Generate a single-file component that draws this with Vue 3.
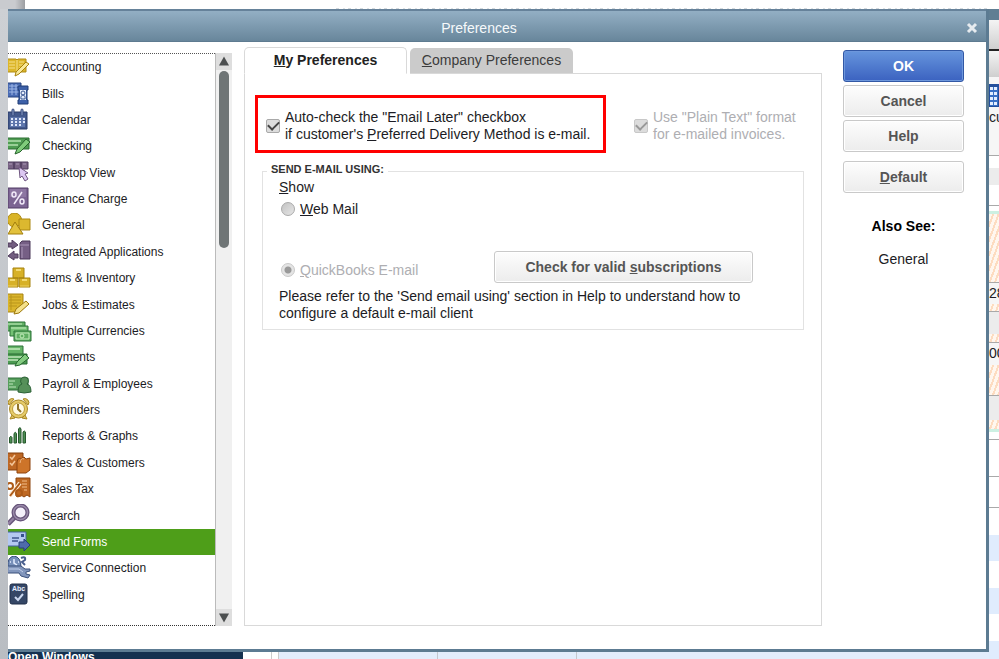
<template>
  <div class="desktop">
    <div class="desktop-top">
      <span class="top-corner"></span>
      <span class="top-caption"></span>
    </div>
    <div class="desktop-left"></div>

    <section class="dialog" role="dialog" aria-labelledby="dialog-title">
      <header class="title-bar">
        <h1 id="dialog-title">Preferences</h1>
        <button class="close" type="button" aria-label="Close">
          <svg viewBox="0 0 12 12"><path d="M2 2l8 8M10 2l-8 8" /></svg>
        </button>
      </header>

      <div class="dialog-body">
        <nav class="sidebar" aria-label="Categories">
          <ul class="categories">
            <li v-for="item in categories" :key="item.name">
              <a href="#" :class="{ active: item.name === selected }" @click.prevent="selected = item.name">
                <svg viewBox="0 0 24 24" aria-hidden="true">
                  <path
                    v-for="(shape, index) in item.shapes"
                    :key="index"
                    :d="shape[0]"
                    :fill="shape[1]"
                    :stroke="shape[2]"
                    :stroke-width="shape[3] || 1"
                  />
                  <text v-if="item.glyph" :x="item.glyph.x" :y="item.glyph.y" :font-size="item.glyph.size" :fill="item.glyph.fill">{{ item.glyph.text }}</text>
                </svg>
                <span>{{ item.name }}</span>
              </a>
            </li>
          </ul>
          <div class="scrollbar" aria-hidden="true">
            <svg viewBox="0 0 16 16"><path d="M8 3l5 9H3z" /></svg>
            <div class="track"><div class="thumb"></div></div>
            <svg viewBox="0 0 16 16"><path d="M8 13l5-9H3z" /></svg>
          </div>
        </nav>

        <main class="content">
          <div class="tabs" role="tablist">
            <button type="button" role="tab" aria-selected="true" class="tab tab--active"><u>M</u>y Preferences</button>
            <button type="button" role="tab" aria-selected="false" class="tab"><u>C</u>ompany Preferences</button>
            <span class="tabs-rule"></span>
          </div>
          <div class="panel">
            <div class="options">
              <label class="option option--marked">
                <input v-model="emailLater" type="checkbox">
                <span>Auto-check the "Email Later" checkbox<br>if customer's <u>P</u>referred Delivery Method is e-mail.</span>
              </label>
              <label class="option option--disabled">
                <input type="checkbox" checked disabled>
                <span>Use "Plain Text" format<br>for e-mailed invoices.</span>
              </label>
            </div>

            <fieldset class="group">
              <legend>SEND E-MAIL USING:</legend>
              <p class="show"><u>S</u>how</p>
              <label class="radio">
                <input type="radio" name="mail" value="web">
                <span><u>W</u>eb Mail</span>
              </label>
              <div class="quickbooks">
                <label class="radio radio--disabled">
                  <input type="radio" name="quickbooks" value="quickbooks" checked disabled>
                  <span><u>Q</u>uickBooks E-mail</span>
                </label>
                <button type="button" class="btn btn--wide">Check for valid <u>s</u>ubscriptions</button>
              </div>
              <p class="hint">Please refer to the 'Send email using' section in Help to understand how to<br>configure a default e-mail client</p>
            </fieldset>
          </div>
        </main>

        <aside class="actions">
          <button type="button" class="btn btn--primary">OK</button>
          <button type="button" class="btn">Cancel</button>
          <button type="button" class="btn">Help</button>
          <button type="button" class="btn btn--apart"><u>D</u>efault</button>
          <h2>Also See:</h2>
          <a href="#" class="see-link">General</a>
        </aside>
      </div>
    </section>

    <div class="desktop-right">
      <div v-for="(strip, index) in strips" :key="index" :class="strip[0]" :style="{ height: strip[1] + 'px' }">{{ strip[2] }}</div>
    </div>
    <div class="desktop-bottom">
      <div class="open-windows">Open Windows</div>
      <div class="gap"></div>
      <div class="gap gap--small"></div>
      <div class="cell"></div>
      <div class="cell cell--short"></div>
      <div class="cell cell--last"></div>
    </div>
  </div>
</template>

<script setup>
import { ref } from 'vue'

const selected = ref('Send Forms')
const emailLater = ref(true)

// each shape: path, fill, stroke, stroke width
const categories = [
  {
    name: 'Accounting',
    shapes: [
      ['M-1 4H8L9 5L10 4H18V17H10L9 18L8 17H-1Z', '#dcb62a', '#b08c14'],
      ['M9 5V17M1 7H7M1 10H7M1 13H7M11 7H16M11 10H16M11 13H14', 'none', '#f6e08a'],
      ['M7 21L8 17L18 7L21 9L11 19Z', '#f8e898', '#a8820e']
    ]
  },
  {
    name: 'Bills',
    shapes: [
      ['M-1 1H13V15H-1Z', '#4a6cb4', '#26437f'],
      ['M1 4H11M1 7H11M1 10H11M4 2V13M8 2V13', 'none', '#9db6e6'],
      ['M10 4H20V8H19V18H20V22H10V18H11V8H10Z', '#3d60a8', '#213c76'],
      ['M12 8H18V18H12Z', '#e4ecfb', 'none'],
      ['M15 9A2 2 0 0 1 15 13A2 3 0 0 1 17 17H13A2 3 0 0 1 15 13A2 2 0 0 1 15 9', 'none', '#35528e']
    ]
  },
  {
    name: 'Calendar',
    shapes: [
      ['M0 4H19V21H0Z', '#43598c', '#2b3d68'],
      ['M2 9H17V19H2Z', '#5e76ac', 'none'],
      ['M4 7V2A1 1 0 0 1 6 2V7M13 7V2A1 1 0 0 1 15 2V7', '#8fa3cc', '#35487a'],
      ['M3 11H5M7 11H9M11 11H13M15 11H17M3 14H5M7 14H9M11 14H13M15 14H17M3 17H5M7 17H9M11 17H13', 'none', '#dfe8fa', 2]
    ]
  },
  {
    name: 'Checking',
    shapes: [
      ['M-1 4H21V15H-1Z', '#4e9c52', '#2c6f33'],
      ['M0 7H13M0 11H10', 'none', '#b2e0ae', 1.5],
      ['M7 20L9 15L18 5L22 8L12 18Z', '#7fcc7b', '#27632c']
    ]
  },
  {
    name: 'Desktop View',
    shapes: [
      ['M-1 1H6V8H-1ZM6 1H13V8H6ZM13 1H20V8H13Z', '#796485', '#4d3a5c'],
      ['M1 3H4M8 3H11M15 3H18', 'none', '#ab98b7'],
      ['M11 6L20 12L17 13L20 18L17 20L14 15L12 17Z', '#dcc7f2', '#6f5680']
    ]
  },
  {
    name: 'Finance Charge',
    shapes: [
      ['M0 1H20V21H0Z', '#7c6493', '#523d66'],
      ['M2 2H18V10H2Z', '#8d76a2', 'none'],
      ['M6 17L14 5M6 5A2 2.500 0 0 1 6 10A2 2.500 0 0 1 6 5M14 12A2 2.500 0 0 1 14 17A2 2.500 0 0 1 14 12', 'none', '#f0e8f8', 1.5]
    ]
  },
  {
    name: 'General',
    shapes: [
      ['M7 0A7 7 0 1 1 6 14A7 7 0 1 1 7 0Z', '#d9b428', '#ac8812'],
      ['M11 6H22V17H11Z', '#dcb82f', '#ac8812'],
      ['M7 9L15 21H0Z', '#e2c13c', '#a27e0c']
    ]
  },
  {
    name: 'Integrated Applications',
    shapes: [
      ['M0 3H4V0L10 5L4 9V7H0ZM10 14H6V11L0 16L6 20V18H10Z', '#735e80', '#503d5d'],
      ['M12 3L14 1H22V19H12Z', '#765f85', '#4b3859'],
      ['M12 5H21M14 7V18', 'none', '#aa97b7']
    ]
  },
  {
    name: 'Items & Inventory',
    shapes: [
      ['M5 2H16V12H5ZM-1 12H10V21H-1ZM11 12H22V21H11Z', '#d7b127', '#a78310'],
      ['M8 3V5H13V3M2 13V15H7V13M14 13V15H19V13', '#f2da73', 'none'],
      ['M0 20H9M12 20H21', 'none', '#eed161']
    ]
  },
  {
    name: 'Jobs & Estimates',
    shapes: [
      ['M-1 1H15V16L9 19H-1Z', '#dab52c', '#a78310'],
      ['M1 4H13M1 7H13M1 10H13M1 13H9M3 2V17', 'none', '#b9951b'],
      ['M6 21L8 16L18 8L21 11L11 20Z', '#f5e18a', '#9d780d']
    ]
  },
  {
    name: 'Multiple Currencies',
    shapes: [
      ['M-1 3H17V12H-1Z', '#63b166', '#2a7236'],
      ['M2 7H20V17H2Z', '#74c174', '#2a7236'],
      ['M6 12H23V22H6Z', '#5fae62', '#2a7236'],
      ['M8 14H21V20H8ZM14 15A2 2 0 0 0 14 19A2 2 0 0 0 14 15M3 9H18M0 5H14', 'none', '#c4edbd']
    ]
  },
  {
    name: 'Payments',
    shapes: [
      ['M-1 1H15V11H-1Z', '#66b468', '#2b7138'],
      ['M-1 9H19V19H-1Z', '#4b9a51', '#286b33'],
      ['M0 4H12M0 12H16M0 15H10', 'none', '#c4e9bd', 1.5],
      ['M7 21L9 17L17 9L21 13L12 20Z', '#83cb80', '#276730']
    ]
  },
  {
    name: 'Payroll & Employees',
    shapes: [
      ['M-1 6H20V18H-1Z', '#569e5c', '#2c6c36'],
      ['M1 9H7M1 12H5M1 15H8', 'none', '#c0e7bd'],
      ['M17 5A4 4 0 0 1 19 12Q23 13 23 20Q16 22 10 20Q10 13 14 12A4 4 0 0 1 17 5Z', '#569059', '#2c6136']
    ]
  },
  {
    name: 'Reminders',
    shapes: [
      ['M6 1A4 4 0 0 0 1 7ZM15 1A4 4 0 0 1 20 7ZM4 17L2 21L7 20ZM17 17L19 21L14 20Z', '#dcc061', '#aa8720'],
      ['M10.5 2A9 9 0 0 1 10.5 20A9 9 0 0 1 10.5 2', '#e6cb69', '#a98825'],
      ['M10.5 5A6 6 0 0 1 10.5 17A6 6 0 0 1 10.5 5', '#fffbe6', '#bb9b36'],
      ['M10 6V11L13 14', 'none', '#8f742a', 2]
    ]
  },
  {
    name: 'Reports & Graphs',
    shapes: [
      ['M1.5 19V13.5Q3 11 4 13.5V19ZM6 19V9.5Q7.5 7 8.5 9.5V19ZM10.5 19V5Q12 2 13 5V19ZM15 19V8Q16.5 6 17.5 8V19Z', '#4c8d52', '#28592e']
    ]
  },
  {
    name: 'Sales & Customers',
    shapes: [
      ['M-1 2H15V19H-1Z', '#bd6724', '#86400c'],
      ['M2 6L4 8L7 4M2 12L4 14L7 10', 'none', '#f3c599', 1.5],
      ['M9 11Q10 6 13 8L16 6L18 8L22 7V19L18 22H9Z', '#cd7429', '#8d430c'],
      ['M12 12Q13 6 16 8', 'none', '#f0b886']
    ]
  },
  {
    name: 'Sales Tax',
    shapes: [
      ['M8 1H22V20L19 18L16 20L13 18L10 20L8 19Z', '#be6822', '#8c450e'],
      ['M14 4H19M14 7H19M14 10H19M16 13H19', 'none', '#f4bf8a'],
      ['M2 19L12 6', 'none', '#ffe9d2', 4],
      ['M2 19L12 6M2 6A2 2 0 0 1 2 12A2 2 0 0 1 2 6M11 13A2 2 0 0 1 11 19A2 2 0 0 1 11 13', 'none', '#ad5b18', 2]
    ]
  },
  {
    name: 'Search',
    shapes: [
      ['M7 13L0 20', 'none', '#68567a', 5],
      ['M7 13L0 20', 'none', '#9382a3', 2],
      ['M12.5 1.500A7 7 0 0 1 12.5 15.500A7 7 0 0 1 12.5 1.500', '#f4f0fa', '#67547a', 4],
      ['M12.5 1.500A7 7 0 0 1 12.5 15.500A7 7 0 0 1 12.5 1.500', 'none', '#998aa9', 1.5]
    ]
  },
  {
    name: 'Send Forms',
    shapes: [
      ['M-1 2H18V16H-1Z', '#b4c8f1', '#45609e'],
      ['M4 8H11M4 11H10', 'none', '#3f568e', 1.5],
      ['M13 4H16V7H13Z', '#35508e', 'none'],
      ['M11 12H16V9L22 15L16 21V18H11Z', '#4e6bab', '#263f7b']
    ]
  },
  {
    name: 'Service Connection',
    shapes: [
      ['M13 2Q18 0 17 4L14 6L17 9', 'none', '#485e8d', 2],
      ['M0 11Q-1 1 6 0Q13 1 13 11Z', '#7890ba', '#344c79'],
      ['M6 3V7L9 9M2 6H3M10 6H11', 'none', '#e4edff', 1.5],
      ['M-1 10H13L17 13H22V15L18 16V18L22 19L20 22L13 20L11 17H-1Z', '#8296bc', '#3b507a'],
      ['M1 13H11L15 16', 'none', '#c2d0ea']
    ]
  },
  {
    name: 'Spelling',
    shapes: [
      ['M4 1H17Q19 1 19 3V19Q19 21 17 21H4Q2 21 2 19V3Q2 1 4 1Z', '#354766', '#202e49'],
      ['M7 14L10 17L15 11', 'none', '#cbd8ef', 2]
    ],
    glyph: { text: 'Abc', x: 4, y: 8, size: 7, fill: '#e4edff' }
  }
]

// slices of the window behind the dialog: kind, height, text
const strips = [
  ['bar', 11],
  ['toolbar', 29],
  ['ink', 2],
  ['toolbar', 26],
  ['pale', 7],
  ['tool-icon', 23],
  ['pale', 48, 'cu'],
  ['line', 1],
  ['blank', 12],
  ['gray', 17],
  ['blank', 20],
  ['line', 1],
  ['blank', 5],
  ['mint', 3],
  ['hatch', 68],
  ['line', 1],
  ['pale', 21, '28'],
  ['hatch', 7],
  ['line', 1],
  ['gray', 22],
  ['hatch', 8],
  ['line', 1],
  ['pale', 22, '00'],
  ['hatch', 30],
  ['line', 1],
  ['gray', 24],
  ['hatch', 9],
  ['mint', 3],
  ['blank', 7],
  ['line', 1],
  ['blank', 36],
  ['line', 1],
  ['blank', 30],
  ['line', 1],
  ['blank', 27],
  ['blue', 26],
  ['blank', 27],
  ['blue', 26],
  ['blank', 27],
  ['blue', 19]
]
</script>

<style>
body {
  margin: 0;
  background: #fff;
}
</style>

<style scoped>
* {
  box-sizing: border-box;
}

.desktop {
  display: grid;
  grid-template-columns: 8px 1fr 10px;
  grid-template-rows: 9px 1fr 7px;
  min-height: 100vh;
  overflow: hidden;
  font-family: "Liberation Sans", Arial, sans-serif;
  font-size: 14px;
  color: #1c1c24;
}

.desktop-top {
  grid-column: 1 / -1;
  display: flex;
  align-items: flex-end;
}

.top-corner {
  width: 25px;
  height: 9px;
  background: linear-gradient(to right, #c9cbcf 60%, #9c9ea2);
}

.top-caption {
  flex: 1;
  height: 1px;
  margin-left: 311px;
  margin-right: 12px;
  background: repeating-linear-gradient(to right, #d5dade 0 3px, #fff 3px 7px, #dfe3e6 7px 9px, #fff 9px 12px);
}

.desktop-left {
  grid-row: 2 / 4;
  background: linear-gradient(#cdd0d4, #b9bdc2);
}

.desktop-right {
  grid-column: 3;
  grid-row: 2 / 4;
  height: 0;
  min-height: 100%;
  overflow: hidden;
  white-space: nowrap;
  font-size: 14px;
  line-height: 20px;
}

.bar {
  background: #607e93;
}

.toolbar {
  background: linear-gradient(#f4f4f4, #cfcfcf);
}

.ink {
  background: #222;
}

.pale {
  background: #f6f6f6;
}

.tool-icon {
  border: 1px solid #234f9c;
  border-top-width: 3px;
  background: repeating-linear-gradient(to right, transparent 0 3px, #3a70c4 3px 4px), repeating-linear-gradient(#e3eeff 0 3px, #3a70c4 3px 5px);
}

.line {
  background: #a9a9a9;
}

.gray {
  background: #ececec;
}

.mint {
  background: #cdf0e2;
}

.hatch {
  background: repeating-linear-gradient(110deg, #fff7ef 0 3px, #fddcc0 3px 5px);
}

.blue {
  background: #e0ecfd;
}

.desktop-bottom {
  grid-column: 2;
  grid-row: 3;
  display: flex;
  height: 7px;
  overflow: hidden;
}

.open-windows {
  width: 235px;
  background: #14304f;
  color: #fff;
  font-size: 12px;
  font-weight: bold;
  line-height: 11px;
}

.gap {
  width: 29px;
  border-right: 1px solid #ccc;
}

.gap--small {
  width: 7px;
}

.cell {
  width: 159px;
  border-right: 1px solid #c4c8cf;
  background: #e2edfd;
}

.cell--short {
  width: 139px;
}

.cell--last {
  flex: 1;
  border-right: 0;
}

.dialog {
  display: flex;
  flex-direction: column;
  border-right: 3px solid #5c7b92;
  border-bottom: 3px solid #5c7b92;
  background: #fff;
}

.title-bar {
  display: flex;
  align-items: center;
  height: 33px;
  padding: 3px 8px 0 0;
  border-top: 2px solid #66829a;
  border-bottom: 1px solid #5e7b90;
  background: linear-gradient(#93afc4, #68869b);
}

.title-bar h1 {
  flex: 1;
  margin: 0 16px 0 0;
  color: #f6f9fb;
  font-size: 14px;
  font-weight: normal;
  line-height: 18px;
  text-align: center;
}

.close {
  width: 12px;
  height: 12px;
  padding: 0;
  border: 0;
  background: none;
}

.close svg {
  display: block;
  fill: none;
  stroke: #e6ebef;
  stroke-width: 3;
}

.dialog-body {
  flex: 1;
  display: grid;
  grid-template-columns: 225px 1fr 121px;
  padding: 5px 22px 23px 0;
}

.sidebar {
  display: flex;
  margin-top: 6px;
  margin-right: 1px;
}

.categories {
  flex: 1;
  display: flex;
  flex-direction: column;
  margin: 0;
  padding: 0 0 17px;
  border-top: 1px dotted #555;
  border-bottom: 1px dotted #333;
  list-style: none;
}

.categories li {
  flex: 1;
  display: flex;
}

.categories a {
  flex: 1;
  display: flex;
  align-items: center;
  gap: 10px;
  color: #1c1c24;
  font-size: 12px;
  text-decoration: none;
}

.categories a.active {
  background: #4e9e19;
  color: #fff;
}

.categories svg {
  width: 24px;
  height: 24px;
}

.categories svg text {
  font-weight: bold;
}

.scrollbar {
  display: flex;
  flex-direction: column;
  width: 17px;
  border-left: 1px solid #bbb;
  background: #f0f0f0;
}

.scrollbar svg {
  width: 16px;
  height: 17px;
  background: #dedede;
  fill: #4c4f50;
}

.track {
  flex: 1;
  padding: 1px 3px;
}

.thumb {
  width: 10px;
  height: 33%;
  border-radius: 5px;
  background: #6f7576;
}

.content {
  display: flex;
  flex-direction: column;
  margin: 0 21px 0 11px;
}

.tabs {
  display: flex;
  align-items: flex-end;
}

.tab {
  height: 26px;
  width: 163px;
  margin-left: 3px;
  padding: 0 0 2px;
  border: 0;
  border-bottom: 1px solid #d9d9d9;
  border-radius: 5px 5px 0 0;
  background: #cbcbcb;
  color: #3c3c3c;
  font-family: inherit;
  font-size: 14px;
}

.tab--active {
  height: 27px;
  margin-left: 0;
  border: 1px solid #d9d9d9;
  border-bottom-color: #fff;
  background: #fff;
  color: #222;
  font-weight: bold;
}

.tabs-rule {
  flex: 1;
  border-bottom: 1px solid #d9d9d9;
}

.panel {
  flex: 1;
  padding: 21px 17px 0 10px;
  border: 1px solid #d9d9d9;
  border-top: 0;
}

.options {
  display: flex;
  gap: 28px;
}

.option {
  display: flex;
  align-items: center;
  gap: 5px;
  height: 58px;
  padding-top: 4px;
  line-height: 17px;
  white-space: nowrap;
}

.option--marked {
  width: 351px;
  padding-left: 8px;
  border: 3px solid #f00;
}

.option--disabled,
.radio--disabled {
  color: #aeaeb2;
}

input {
  appearance: none;
  flex: none;
  width: 14px;
  height: 14px;
  margin: 0;
  border: 1px solid #a9a9a9;
  background: #dcdcdc;
}

input[type="checkbox"] {
  display: grid;
  place-items: center;
  border-radius: 2px;
}

input[type="checkbox"]:checked::before {
  content: "";
  width: 9px;
  height: 5px;
  margin-bottom: 3px;
  border: solid #444;
  border-width: 0 0 2px 2px;
  transform: rotate(-45deg);
}

input[type="checkbox"]:disabled::before {
  border-color: #999;
}

input[type="radio"] {
  border-radius: 50%;
  background: linear-gradient(135deg, #c2c2c2, #e6e6e6);
}

input[type="radio"]:checked {
  background: radial-gradient(circle, #999 0 3px, #e4e4e4 4px);
}

input:disabled {
  border-color: #c8c8c8;
}

.group {
  min-width: 0;
  margin: 10px 0 0 7px;
  padding: 0 16px 7px;
  border: 1px solid #e2e2e2;
}

.group legend {
  margin-left: -12px;
  padding: 0 4px 3px;
  color: #333;
  font-size: 11px;
  font-weight: bold;
  line-height: 13px;
}

.show {
  margin: 0;
  line-height: 17px;
}

.radio {
  display: flex;
  align-items: center;
  gap: 5px;
  margin-left: 2px;
  line-height: 18px;
}

.show + .radio {
  margin-top: 4px;
}

.quickbooks {
  display: flex;
  align-items: flex-end;
  justify-content: space-between;
  margin: 33px 34px 0 0;
}

.quickbooks .radio {
  margin-bottom: 4px;
}

.hint {
  margin: 5px 0 0;
  line-height: 17px;
}

.btn {
  height: 32px;
  padding: 0;
  border: 1px solid #c9c9c9;
  border-radius: 3px;
  background: linear-gradient(#fdfdfd, #ececec);
  box-shadow: inset 0 0 0 1px #fff;
  color: #555;
  font-family: inherit;
  font-size: 14px;
  font-weight: bold;
}

.btn--wide {
  width: 259px;
}

.btn--primary {
  border-color: #3258a5;
  background: linear-gradient(#6695dd, #3b62c0);
  box-shadow: inset 0 0 0 1px #6d97dc;
  color: #fff;
}

.btn--apart {
  margin-top: 6px;
}

.actions {
  display: flex;
  flex-direction: column;
  gap: 3px;
  padding-top: 3px;
  text-align: center;
}

.actions h2 {
  margin: 20px 0 0;
  color: #000;
  font-size: 14px;
  line-height: 20px;
}

.see-link {
  margin-top: 10px;
  color: #1c1c24;
  line-height: 20px;
  text-decoration: none;
}
</style>
